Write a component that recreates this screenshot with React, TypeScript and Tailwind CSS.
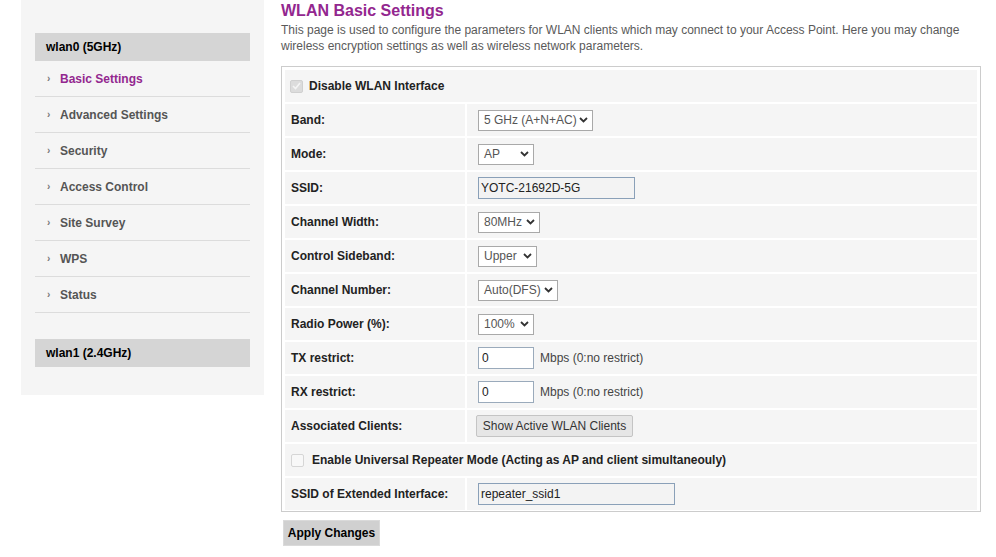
import React from "react";

const font = { fontFamily: '"Liberation Sans", Arial, sans-serif' };

const menu = [
  "Basic Settings",
  "Advanced Settings",
  "Security",
  "Access Control",
  "Site Survey",
  "WPS",
  "Status",
];

function Chevron() {
  return (
    <svg width="9" height="6" viewBox="0 0 9 6" className="shrink-0">
      <path d="M1 1l3.5 3.5L8 1" fill="none" stroke="#333" strokeWidth="1.8" />
    </svg>
  );
}

function Select({ value, width }: { value: string; width: string }) {
  return (
    <div
      className={`${width} h-[21px] flex items-center justify-between border border-[#a9a9a9] bg-white pl-[5px] pr-[4px] text-[12px] text-[#555]`}
    >
      <span>{value}</span>
      <Chevron />
    </div>
  );
}

function Label({ children }: { children: React.ReactNode }) {
  return (
    <div className="bg-[#f5f5f5] flex items-center pl-[6px] text-[12px] font-bold text-[#222]">
      {children}
    </div>
  );
}

function Row({ label, children }: { label: string; children: React.ReactNode }) {
  return (
    <div className="grid grid-cols-[180px_1fr] gap-[2px] h-[32px]">
      <Label>{label}</Label>
      <div className="bg-[#f5f5f5] flex items-center pl-[11px]">{children}</div>
    </div>
  );
}

export default function App() {
  return (
    <div className="flex bg-white min-h-[557px] w-[996px]" style={font}>
      {/* sidebar */}
      <div className="ml-[21px] w-[243px] self-start bg-[#f5f5f5] pt-[33px] pb-[28px] px-[14px]">
        <div className="h-[28px] bg-[#d5d5d5] flex items-center pl-[11px] text-[12px] font-bold text-black">
          wlan0 (5GHz)
        </div>
        {menu.map((m, i) => (
          <div
            key={m}
            className="h-[36px] border-b border-[#dcdcdc] flex items-center pl-[12px] text-[12px] font-bold"
          >
            <span className="text-[10px] text-[#777] w-[13px]">›</span>
            <span className={i === 0 ? "text-[#93278f]" : "text-[#555]"}>{m}</span>
          </div>
        ))}
        <div className="mt-[26px] h-[28px] bg-[#d5d5d5] flex items-center pl-[11px] text-[12px] font-bold text-black">
          wlan1 (2.4GHz)
        </div>
      </div>

      {/* main */}
      <div className="ml-[17px] w-[700px] pt-[1px]">
        <h1 className="text-[16px] leading-[20px] font-bold text-[#93278f]">WLAN Basic Settings</h1>
        <p className="mt-[1px] text-[12px] leading-[16px] text-[#5a5a5a]">
          This page is used to configure the parameters for WLAN clients which may connect to your Access Point. Here you may change
          <br />
          wireless encryption settings as well as wireless network parameters.
        </p>

        <div className="mt-[12px] border border-[#ccc] pt-[3px] pb-[1px] px-[3px] flex flex-col gap-[2px]">
          <div className="h-[32px] bg-[#f5f5f5] flex items-center pl-[5px] text-[12px] font-bold text-[#222]">
            <span className="w-[13px] h-[13px] rounded-[2px] bg-[#dcdcdc] border border-[#d0d0d0] flex items-center justify-center">
              <svg width="9" height="8" viewBox="0 0 9 8">
                <path d="M1 4l2.5 2.5L8 1" fill="none" stroke="#f4f4f4" strokeWidth="1.6" />
              </svg>
            </span>
            <span className="ml-[6px]">Disable WLAN Interface</span>
          </div>
          <Row label="Band:">
            <Select value="5 GHz (A+N+AC)" width="w-[115px]" />
          </Row>
          <Row label="Mode:">
            <Select value="AP" width="w-[56px]" />
          </Row>
          <Row label="SSID:">
            <div className="w-[157px] h-[22px] border border-[#8aa0b8] bg-[#f3f3f3] flex items-center pl-[2px] text-[12px] text-[#222]">
              YOTC-21692D-5G
            </div>
          </Row>
          <Row label="Channel Width:">
            <Select value="80MHz" width="w-[62px]" />
          </Row>
          <Row label="Control Sideband:">
            <Select value="Upper" width="w-[59px]" />
          </Row>
          <Row label="Channel Number:">
            <Select value="Auto(DFS)" width="w-[80px]" />
          </Row>
          <Row label="Radio Power (%):">
            <Select value="100%" width="w-[56px]" />
          </Row>
          <Row label="TX restrict:">
            <div className="w-[56px] h-[22px] border border-[#9aaabb] bg-white flex items-center pl-[3px] text-[12px] text-[#222]">
              0
            </div>
            <span className="ml-[6px] text-[12px] text-[#444]">Mbps (0:no restrict)</span>
          </Row>
          <Row label="RX restrict:">
            <div className="w-[56px] h-[22px] border border-[#9aaabb] bg-white flex items-center pl-[3px] text-[12px] text-[#222]">
              0
            </div>
            <span className="ml-[6px] text-[12px] text-[#444]">Mbps (0:no restrict)</span>
          </Row>
          <div className="grid grid-cols-[180px_1fr] gap-[2px] h-[32px]">
            <Label>Associated Clients:</Label>
            <div className="bg-[#f5f5f5] flex items-center pl-[9px]">
              <button className="w-[157px] h-[22px] border border-[#c4c4c4] rounded-[2px] bg-[#e6e6e6] text-[12px] text-[#333]">
                Show Active WLAN Clients
              </button>
            </div>
          </div>
          <div className="h-[32px] bg-[#f5f5f5] flex items-center pl-[6px] text-[12px] font-bold text-[#222]">
            <span className="w-[13px] h-[13px] rounded-[2px] bg-[#f8f8f8] border border-[#d6d6d6]" />
            <span className="ml-[8px]">Enable Universal Repeater Mode (Acting as AP and client simultaneouly)</span>
          </div>
          <Row label="SSID of Extended Interface:">
            <div className="w-[197px] h-[22px] border border-[#8aa0b8] bg-[#f3f3f3] flex items-center pl-[2px] text-[12px] text-[#222]">
              repeater_ssid1
            </div>
          </Row>
        </div>

        <button className="mt-[8px] ml-[2px] w-[97px] h-[26px] bg-[#d0d0d0] border border-[#dadada] text-[12px] font-bold text-black">
          Apply Changes
        </button>
      </div>
    </div>
  );
}
